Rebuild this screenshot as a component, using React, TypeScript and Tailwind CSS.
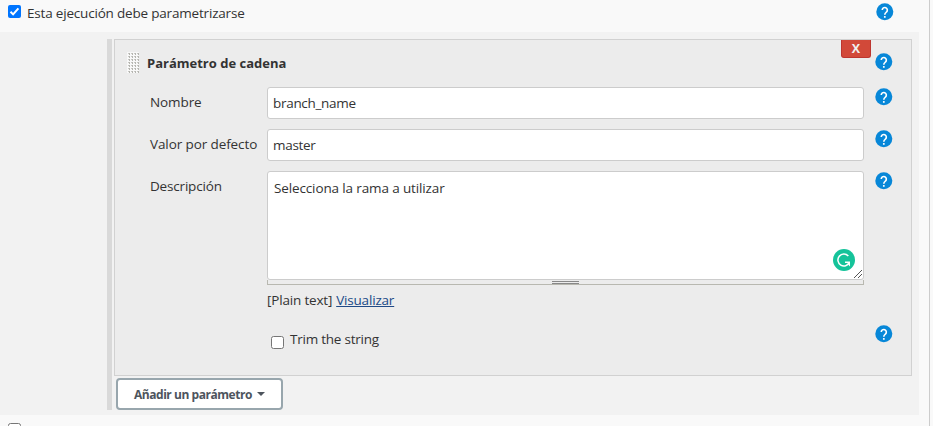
import type { ReactNode } from "react";

function Help({ className = "" }: { className?: string }) {
  return (
    <svg viewBox="0 0 18 18" className={`block h-[18px] w-[18px] shrink-0 ${className}`}>
      <g transform="translate(-1.4 -1.4) scale(0.85)">
        <circle cx="12" cy="12" r="10" fill="#0787d8" />
        <path d="M9 10a3 3 0 1 1 5.1 2.1c-1 1-2.1 1.7-2.1 3.5" fill="none" stroke="#fff" strokeWidth="1.9" />
        <rect x="11" y="17" width="2" height="2" fill="#fff" />
      </g>
    </svg>
  );
}

function Row({ label, labelClass, children }: { label: string; labelClass: string; children: ReactNode }) {
  return (
    <div className="flex items-start">
      <div className="w-[152px] shrink-0 pt-[5px] pl-[35px] leading-5 whitespace-nowrap">
        <span className={labelClass}>{label}</span>
      </div>
      <div className="w-[597px] shrink-0">{children}</div>
      <Help className="mt-[1px] ml-[11px]" />
    </div>
  );
}

const field = "flex h-8 items-center rounded-[3px] border border-[#ccc] bg-white pl-[5px] pt-px";

export default function App() {
  return (
    <div className="h-[426px] w-[933px] overflow-hidden bg-[#f9f9f9] font-['Open_Sans','Noto_Sans',sans-serif] text-[13.5px] text-[#333]">
      <div className="h-full w-[930px] border-r border-[#ccc]">
        <div className="flex h-8 items-start pl-2">
          <svg viewBox="0 0 13 13" className="mt-[5px] h-[13px] w-[13px]">
            <rect width="13" height="13" rx="2" fill="#0075ff" />
            <path d="M2.5 6.8 5.1 9.4 10.4 3.3" fill="none" stroke="#fff" strokeWidth="2" />
          </svg>
          <span className="mt-[3px] ml-[6px] w-[849px] leading-5 tracking-[-0.19px]">Esta ejecución debe parametrizarse</span>
          <Help className="mt-[3px]" />
        </div>
        <div className="flex h-[383px] w-[919px] bg-[#f2f2f2] pt-[7px] pl-[107px]">
          <div className="h-[371px] w-[5px] shrink-0 bg-[#d9d9d9]" />
          <div className="ml-[2px]">
            <div className="h-[337px] w-[798px] border border-[#d1d1d1] bg-[#ececec]">
              <div className="flex h-[47px] items-start pl-[12px]">
                <svg className="mt-[12px] h-[21px] w-[12px]" viewBox="0 0 12 21">
                  <defs>
                    <pattern id="grip" width="3" height="3" patternUnits="userSpaceOnUse">
                      <rect width="3" height="3" fill="#f8f8f8" />
                      <rect x="1" y="1" width="2" height="1" fill="#c8c8c4" />
                      <rect x="2" y="1" width="1" height="2" fill="#b5b5b0" />
                    </pattern>
                  </defs>
                  <rect width="12" height="21" fill="url(#grip)" />
                </svg>
                <b className="mt-[13px] ml-[8px] w-[694px] text-[13px] leading-5">
                  <span>Parámetro de cadena</span>
                </b>
                <div className="flex h-[18px] w-[30px] items-center justify-center rounded-b-[3px] border border-t-0 border-[#bd362f] bg-[#d24939] pt-[2px] text-[12.5px] font-bold text-[#f0f0f0]">X</div>
                <Help className="mt-[13px] ml-[4px]" />
              </div>
              <div className="flex flex-col gap-[10px]">
                <Row label="Nombre" labelClass="tracking-[-0.1px]">
                  <div className={field}><span className="tracking-[-0.3px]">branch_name</span></div>
                </Row>
                <Row label="Valor por defecto" labelClass="tracking-[-0.1px]">
                  <div className={field}><span className="tracking-[-0.3px]">master</span></div>
                </Row>
                <Row label="Descripción" labelClass="tracking-[-0.18px]">
                  <div className="relative h-[109px] rounded-[3px] border border-[#ccc] bg-white pt-[6px] pl-[6px] leading-5">
                    <span className="tracking-[-0.13px]">Selecciona la rama a utilizar</span>
                    <svg className="absolute right-[8px] bottom-[8px] h-[22px] w-[22px]" viewBox="0 0 22 22">
                      <circle cx="11" cy="11" r="11" fill="#15c39a" />
                      <path d="M15.3 6.9A6 6 0 1 0 16.4 13.4" fill="none" stroke="#fff" strokeWidth="1.5" />
                      <path d="M12 12.4h5v5l-1.4-1.4-1-2.1H12z" fill="#fff" />
                    </svg>
                    <svg className="absolute right-[1px] bottom-[1px] h-[9px] w-[9px]" viewBox="0 0 9 9">
                      <path d="M1 9 9 1M5 9 9 5" stroke="#555" fill="none" />
                    </svg>
                  </div>
                  <div className="flex h-[5px] flex-col items-center border border-t-0 border-[#b8b8b0] pt-px">
                    <div className="h-[3px] w-[27px] border-y border-[#888]" />
                  </div>
                </Row>
              </div>
              <div className="mt-[5px] flex pl-[152px] leading-5">
                <span className="tracking-[-0.18px]">[Plain text]</span>
                <span className="ml-1 tracking-[-0.18px] text-[#204a87] underline">Visualizar</span>
              </div>
              <div className="mt-[16px] flex items-start pl-[156px]">
                <div className="mt-[10px] h-[13px] w-[13px] rounded-[2.5px] border border-[#767676] bg-white" />
                <span className="mt-[3px] ml-[6px] w-[585px] leading-5"><span className="tracking-[-0.23px]">Trim the string</span></span>
                <Help className="-mt-[1px]" />
              </div>
            </div>
            <div className="mt-[2px] ml-[2px] flex h-8 w-[167px] items-center rounded-[4px] border-2 border-[#98a6ad] bg-white pl-4 text-[12px] font-bold whitespace-nowrap text-[#4d545d]">
              <span className="pt-px tracking-[-0.46px]">Añadir un parámetro</span>
              <svg className="ml-[5px] h-1 w-2" viewBox="0 0 8 4"><path d="M0 0h8L4 4z" fill="#4d545d" /></svg>
            </div>
          </div>
        </div>
        <div className="mt-[8px] ml-2 h-[13px] w-[13px] rounded-[2.5px] border border-[#767676] bg-white" />
      </div>
    </div>
  );
}
